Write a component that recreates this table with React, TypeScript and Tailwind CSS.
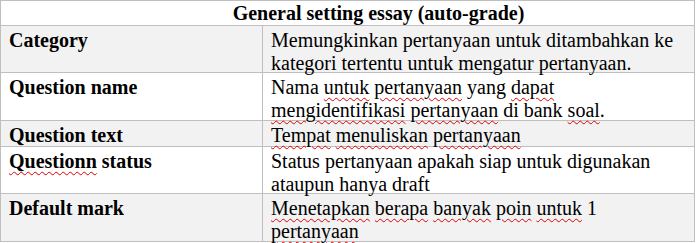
import React from "react";

interface IRow {
  id: number;
  label: React.ReactNode;
  desc: React.ReactNode;
  height: string;
  bg: string;
}

const Sq: React.FC<{ children: React.ReactNode }> = ({ children }) => (
  <span className="underline decoration-wavy decoration-[#e00000] decoration-1 underline-offset-[3px]">
    {children}
  </span>
);

const App: React.FC = () => {
  const rows: IRow[] = [
    {
      id: 1,
      label: "Category",
      desc: (
        <>
          Memungkinkan pertanyaan untuk ditambahkan ke
          <br />
          kategori tertentu untuk mengatur pertanyaan.
        </>
      ),
      height: "h-[47px]",
      bg: "bg-[#f2f2f2]",
    },
    {
      id: 2,
      label: "Question name",
      desc: (
        <>
          Nama <Sq>untuk</Sq> <Sq>pertanyaan</Sq> yang <Sq>dapat</Sq>
          <br />
          <Sq>mengidentifikasi</Sq> <Sq>pertanyaan</Sq> di bank <Sq>soal</Sq>.
        </>
      ),
      height: "h-[48px]",
      bg: "bg-white",
    },
    {
      id: 3,
      label: "Question text",
      desc: (
        <>
          <Sq>Tempat</Sq> <Sq>menuliskan</Sq> <Sq>pertanyaan</Sq>
        </>
      ),
      height: "h-[26px]",
      bg: "bg-[#f2f2f2]",
    },
    {
      id: 4,
      label: (
        <>
          <Sq>Questionn</Sq> status
        </>
      ),
      desc: (
        <>
          Status pertanyaan apakah siap untuk digunakan
          <br />
          ataupun hanya draft
        </>
      ),
      height: "h-[47px]",
      bg: "bg-white",
    },
    {
      id: 5,
      label: "Default mark",
      desc: (
        <>
          <Sq>Menetapkan</Sq> <Sq>berapa</Sq> <Sq>banyak</Sq> <Sq>poin</Sq>{" "}
          <Sq>untuk</Sq> 1
          <br />
          <Sq>pertanyaan</Sq>
        </>
      ),
      height: "h-[48px]",
      bg: "bg-[#f2f2f2]",
    },
  ];

  return (
    <div className="w-[696px] h-[243px] bg-white overflow-hidden">
      <div
        className="w-[695px] border-l border-t border-[#bfbfbf] text-black text-[20px] leading-[23px]"
        style={{ fontFamily: '"Liberation Serif", "Times New Roman", serif' }}
      >
        <div className="h-[25px] border-r border-b border-[#bfbfbf] bg-white text-center font-bold pt-[1px] pl-[62px]">
          General setting essay (auto-grade)
        </div>
        {rows.map((row) => (
          <div key={row.id} className={`flex ${row.height} ${row.bg}`}>
            <div className="w-[262px] shrink-0 border-r border-b border-[#bfbfbf] px-2 pt-[3px] font-bold whitespace-nowrap">
              {row.label}
            </div>
            <div className="flex-1 border-r border-b border-[#bfbfbf] px-2 pt-[3px] whitespace-nowrap">
              {row.desc}
            </div>
          </div>
        ))}
      </div>
    </div>
  );
};

export default App;
